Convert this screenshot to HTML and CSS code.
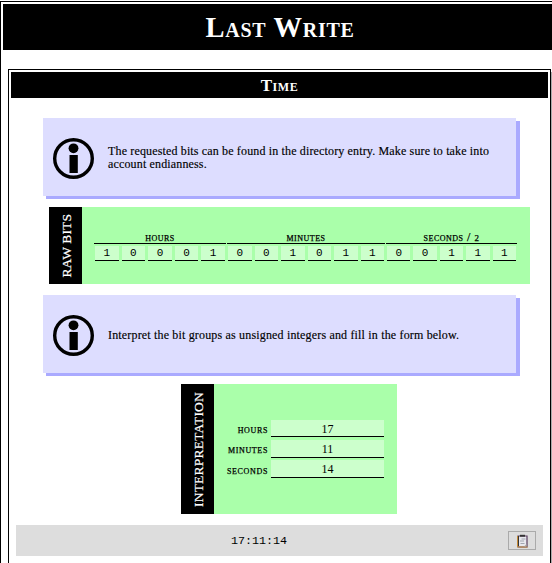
FILE: index.html
```html
<!DOCTYPE html>
<html lang="en">
<head>
<meta charset="utf-8">
<title>Last Write</title>
<link rel="stylesheet" href="styles.css">
</head>
<body>
<main class="page">
  <h1 class="title"><span>Last Write</span></h1>
  <section class="panel">
    <h2 class="subtitle"><span>Time</span></h2>
    <div class="info">
      <svg class="icon" viewBox="0 0 41 41"><circle cx="20.500" cy="20.500" r="18.800" fill="none" stroke="#000" stroke-width="3.400"/><circle cx="20.500" cy="10.300" r="4.900"/><path d="M16.500 17h8.300v18h-8.300z"/></svg>
      <p>The requested bits can be found in the directory entry. Make sure to take into<br>account endianness.</p>
    </div>
    <div class="card raw">
      <div class="side"><span class="side-raw">RAW BITS</span></div>
      <div class="bits">
        <div class="group g5"><div class="label">hours</div><div class="cells"><b>1</b><b>0</b><b>0</b><b>0</b><b>1</b></div></div>
        <div class="group g6"><div class="label">minutes</div><div class="cells"><b>0</b><b>0</b><b>1</b><b>0</b><b>1</b><b>1</b></div></div>
        <div class="group g-last"><div class="label">seconds / <small>2</small></div><div class="cells"><b>0</b><b>0</b><b>1</b><b>1</b><b>1</b></div></div>
      </div>
    </div>
    <div class="info second">
      <svg class="icon" viewBox="0 0 41 41"><circle cx="20.500" cy="20.500" r="18.800" fill="none" stroke="#000" stroke-width="3.400"/><circle cx="20.500" cy="10.300" r="4.900"/><path d="M16.500 17h8.300v18h-8.300z"/></svg>
      <p>Interpret the bit groups as unsigned integers and fill in the form below.</p>
    </div>
    <div class="card interp">
      <div class="side"><span class="side-int">INTERPRETATION</span></div>
      <div class="form">
        <label>hours</label><div class="field short">17</div>
        <label>minutes</label><div class="field">11</div>
        <label>seconds</label><div class="field">14</div>
      </div>
    </div>
    <div class="result">
      <output>17:11:14</output>
      <button class="copy" aria-label="Copy"><svg viewBox="0 0 12 14"><path d="M1.500 2h9v11h-9z" fill="#e8e8ee" stroke="#5b3f60" stroke-width="1.200"/><path d="M1 2v11M1 13h10" stroke="#c58a3a"/><path d="M2 2v10" stroke="#333"/><path d="M3.500 .8h5v1.900h-5z" fill="#333"/><path d="M5 5h4M3.500 7h4M4 9.500h4" stroke="#a2a6b0"/><path d="M7.500 12.400l2.500-2.500v2.500z" fill="#aaa"/></svg></button>
    </div>
  </section>
</main>
</body>
</html>
```

FILE: styles.css
```css
* { box-sizing: border-box; }
body { margin: 0; background: #fff; color: #000; font-family: "Liberation Serif", serif; overflow: hidden; }
.page { width: 560px; height: 570px; margin-top: 1px; border: 1px solid #000; padding: 2px; }
.title, .subtitle { margin: 0; background: #000; color: #fff; display: flex; align-items: center; justify-content: center; font-variant: small-caps; }
.title { height: 46px; font-size: 28.5px; letter-spacing: .7px; }
.title span { margin: 2px 0 0; }
.subtitle { height: 26px; font-size: 17px; letter-spacing: .6px; }
.subtitle span { margin-top: 2px; }
.panel { width: 543px; height: 510px; margin: 19px 0 0 5px; border: 1px solid #000; padding: 2px; box-shadow: 3px 3px 0 #aaa; }
.info { width: 473px; height: 78px; margin: 20px 0 0 32px; padding-left: 10px; display: flex; align-items: center; background: #ddf; box-shadow: 3px 3px 0 #aaf, 4px 3px 0 #aaf; }
.icon { width: 41px; height: 41px; margin-top: 3px; flex: none; }
.info p { margin: 2px 0 0 14px; font-size: 12px; line-height: 13px; letter-spacing: .15px; white-space: nowrap; -webkit-text-stroke: .15px; }
.second p { letter-spacing: .17px; }
.card { display: flex; background: #afa; }
.raw { width: 481px; height: 77px; margin: 11px 0 0 38px; }
.side { width: 33px; flex: none; background: #000; color: #fff; display: flex; align-items: center; justify-content: center; }
.side span { margin-left: 2px; writing-mode: vertical-rl; transform: rotate(180deg); font-size: 13.5px; line-height: 16px; white-space: nowrap; -webkit-text-stroke: .2px; }
.side-raw { letter-spacing: .1px; }
.side-int { letter-spacing: .2px; }
.bits { display: flex; gap: 1px; padding: 23px 0 0 12px; }
.g5 { width: 132px; }
.g6 { width: 158px; }
.g-last { width: 131px; }
.label { height: 14px; border-bottom: 1px solid #000; text-align: center; font-size: 12px; line-height: 14px; font-variant: small-caps; letter-spacing: .5px; -webkit-text-stroke: .25px; }
.label small { font-size: 9px; }
.cells { display: flex; gap: 3px; padding: 2px 1px 0; }
.cells b { flex: 1; height: 15px; background: #cfc; border-bottom: 1px solid #000; font: 11px/14px "Liberation Mono", monospace; text-align: center; }
.second { margin-top: 11px; }
.interp { width: 216px; height: 130px; margin: 11px 0 0 170px; }
.form { display: grid; grid-template-columns: 54px 113px; grid-template-rows: 17px 18px 18px; column-gap: 3px; row-gap: 3px; align-content: start; padding: 36px 0 0; }
.form label { display: flex; justify-content: flex-end; font-size: 12px; line-height: 19px; font-variant: small-caps; letter-spacing: .65px; white-space: nowrap; -webkit-text-stroke: .25px; }
.field { height: 18px; background: #cfc; border-bottom: 1px solid #000; font-size: 12px; line-height: 18px; text-align: center; }
.short { height: 17px; }
.field:last-child { height: 18px; margin-top: -1px; }
.result { width: 527px; height: 31px; margin: 11px 0 0 5px; background: #ddd; display: grid; grid-template-columns: 1fr 28px; align-items: center; padding-right: 7px; }
.result output { font: 11.7px/14px "Liberation Mono", monospace; text-align: center; padding-right: 6px; }
.copy { width: 28px; height: 19px; padding: 0; border: 1px solid #aaa; background: #ddd; display: flex; align-items: center; justify-content: center; }
.copy svg { width: 13px; height: 14px; }
```
